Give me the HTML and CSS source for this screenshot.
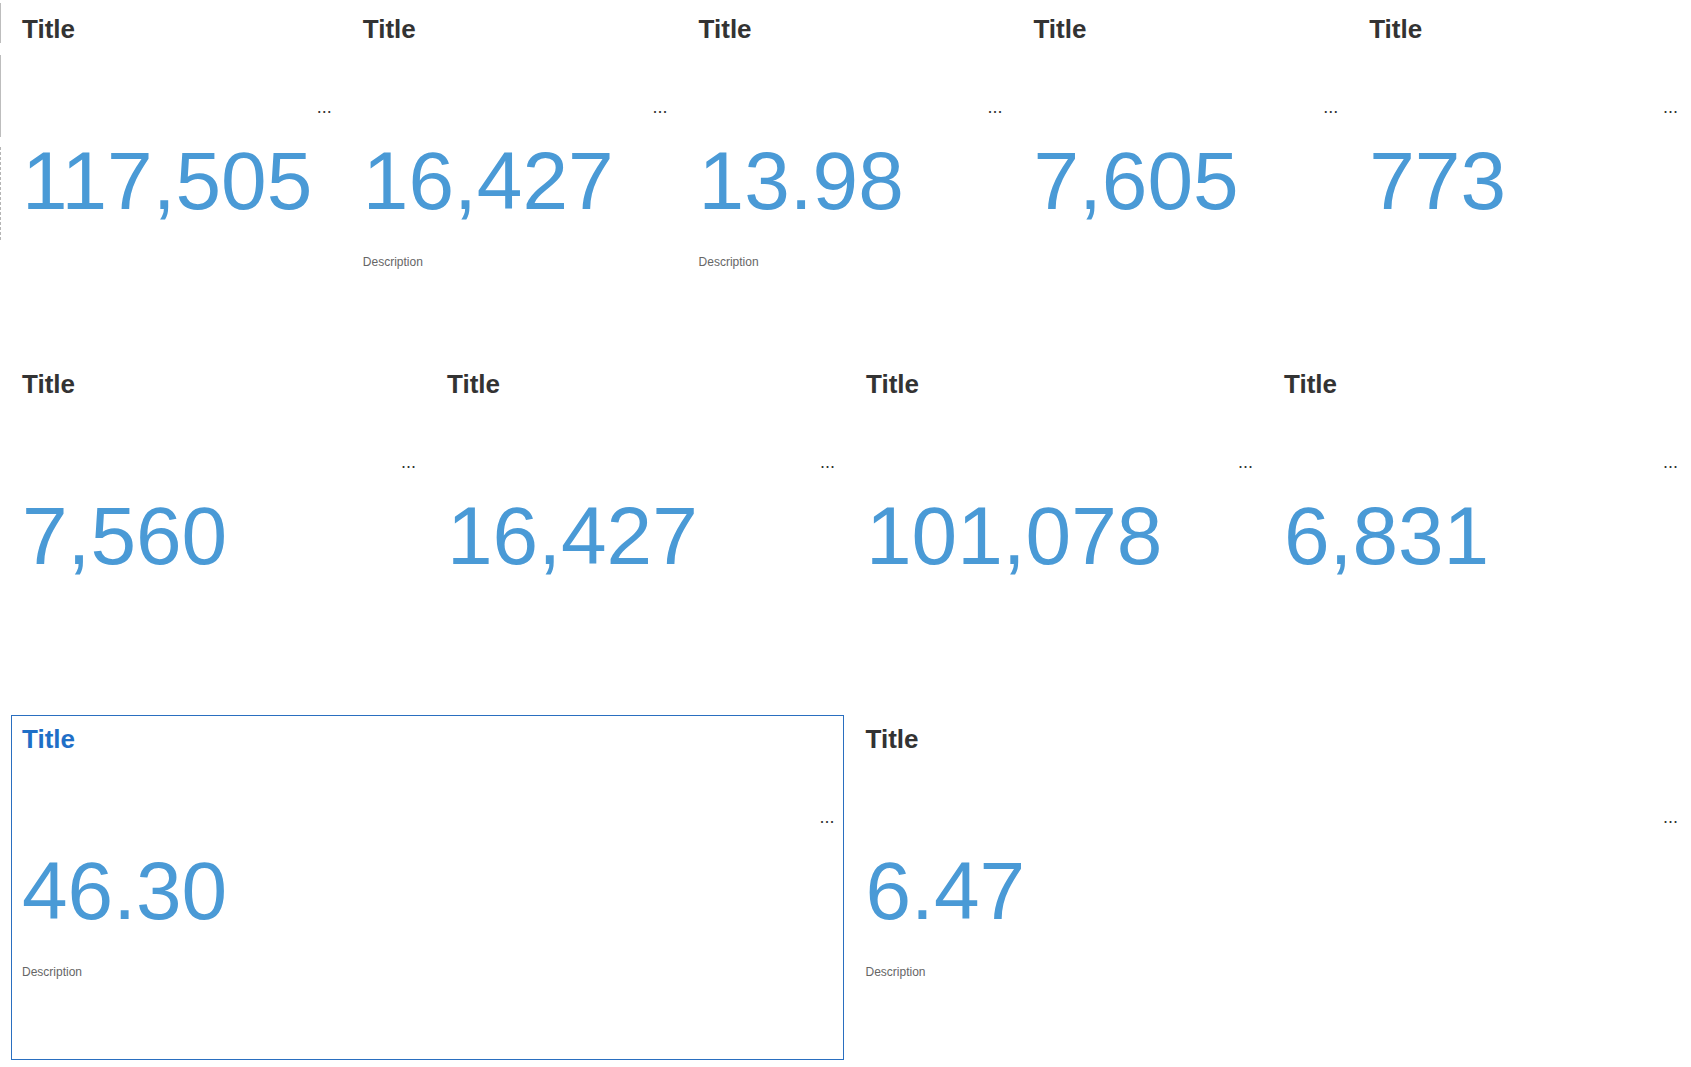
FILE: index.html
```html
<!DOCTYPE html>
<html>
<head>
  <title>Dashboard</title>
  <link rel="stylesheet" href="styles.css">
</head>
<body>
  <div class="edge">
    <div class="edge-line"></div>
    <div class="edge-line long"></div>
    <div class="edge-line dashed"></div>
  </div>

  <div class="dashboard">
    <div class="row row-5">
      <div class="tile">
        <h2 class="tile-title">Title</h2>
        <div class="tile-menu">...</div>
        <div class="tile-value">117,505</div>
      </div>
      <div class="tile">
        <h2 class="tile-title">Title</h2>
        <div class="tile-menu">...</div>
        <div class="tile-value">16,427</div>
        <div class="tile-desc">Description</div>
      </div>
      <div class="tile">
        <h2 class="tile-title">Title</h2>
        <div class="tile-menu">...</div>
        <div class="tile-value">13.98</div>
        <div class="tile-desc">Description</div>
      </div>
      <div class="tile">
        <h2 class="tile-title">Title</h2>
        <div class="tile-menu">...</div>
        <div class="tile-value">7,605</div>
      </div>
      <div class="tile">
        <h2 class="tile-title">Title</h2>
        <div class="tile-menu">...</div>
        <div class="tile-value">773</div>
      </div>
    </div>

    <div class="row row-4">
      <div class="tile">
        <h2 class="tile-title">Title</h2>
        <div class="tile-menu">...</div>
        <div class="tile-value">7,560</div>
      </div>
      <div class="tile">
        <h2 class="tile-title">Title</h2>
        <div class="tile-menu">...</div>
        <div class="tile-value">16,427</div>
      </div>
      <div class="tile">
        <h2 class="tile-title">Title</h2>
        <div class="tile-menu">...</div>
        <div class="tile-value">101,078</div>
      </div>
      <div class="tile">
        <h2 class="tile-title">Title</h2>
        <div class="tile-menu">...</div>
        <div class="tile-value">6,831</div>
      </div>
    </div>

    <div class="row row-2">
      <div class="tile selected">
        <h2 class="tile-title">Title</h2>
        <div class="tile-menu">...</div>
        <div class="tile-value">46.30</div>
        <div class="tile-desc">Description</div>
      </div>
      <div class="tile">
        <h2 class="tile-title">Title</h2>
        <div class="tile-menu">...</div>
        <div class="tile-value">6.47</div>
        <div class="tile-desc">Description</div>
      </div>
    </div>
  </div>
</body>
</html>
```
FILE: styles.css
```css
body {
  margin: 0;
  background: #fff;
  font-family: "Liberation Sans", Arial, sans-serif;
  color: #333;
}

/* sliver of the side panel on the left edge */
.edge {
  position: absolute;
  top: 0;
  left: 0;
  width: 1px;
}

.edge-line {
  margin-top: 3px;
  height: 40px;
  border-left: 1px solid #bdbdbd;
}

.edge-line.long {
  margin-top: 12px;
  height: 82px;
}

.edge-line.dashed {
  margin-top: 10px;
  height: 93px;
  border-left: 1px dashed #b5b5b5;
}

.dashboard {
  display: flex;
  flex-direction: column;
  gap: 10px;
  padding: 5px 4px 0 11px;
}

.row {
  display: grid;
  column-gap: 11px;
  height: 345px;
}

.row-5 { grid-template-columns: 330fr 325fr 324fr 325fr 329fr; }
.row-4 { grid-template-columns: 414fr 408fr 407fr 414fr; }
.row-2 { grid-template-columns: repeat(2, 1fr); }

.tile {
  box-sizing: border-box;
  display: flex;
  flex-direction: column;
  padding: 8px 10px;
  border: 1px solid transparent;
  min-width: 0;
}

.tile.selected {
  border-color: #2a6fc0;
}

.tile-title {
  margin: 0;
  font-size: 26px;
  line-height: 30px;
  font-weight: bold;
  color: #333;
}

.tile.selected .tile-title {
  color: #1f6fc7;
}

.tile-menu {
  margin-top: 54px;
  margin-right: -2px;
  text-align: right;
  font-size: 18px;
  line-height: 18px;
  color: #333;
}

.tile-value {
  margin-top: 24px;
  font-size: 82px;
  line-height: 82px;
  color: #4a9ad6;
  white-space: nowrap;
}

.tile-desc {
  margin-top: 33px;
  font-size: 12px;
  line-height: 14px;
  color: #666;
}
```
